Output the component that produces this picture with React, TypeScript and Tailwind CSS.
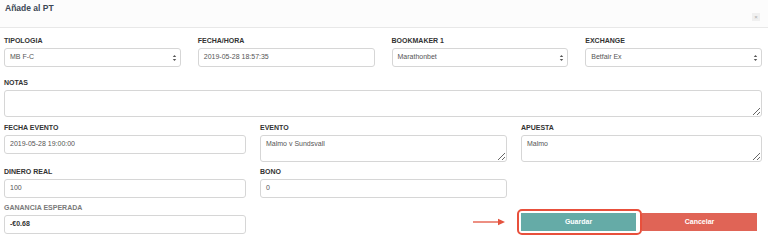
import React from "react";

const font = { fontFamily: '"Liberation Sans", Arial, sans-serif' };

function Label({ children, gray }: { children: React.ReactNode; gray?: boolean }) {
  return (
    <div className={`h-[10px] leading-[10px] text-[7px] font-bold mb-[2px] ${gray ? "text-[#7a7a7a]" : "text-[#333]"}`}>
      {children}
    </div>
  );
}

function Input({ value, bold }: { value: string; bold?: boolean }) {
  return (
    <div
      className={`h-[19px] border border-[#d6d6d6] rounded-[3px] bg-white flex items-center px-[5px] text-[7px] ${bold ? "font-bold text-[#333]" : "text-[#555]"}`}
    >
      {value}
    </div>
  );
}

function Select({ value }: { value: string }) {
  return (
    <div className="h-[19px] border border-[#d6d6d6] rounded-[3px] bg-white flex items-center justify-between pl-[5px] pr-[3px] text-[7px] text-[#555]">
      <span>{value}</span>
      <svg width="5" height="8" viewBox="0 0 5 8">
        <path d="M0.8 3 L2.5 1 L4.2 3 Z" fill="#555" />
        <path d="M0.8 5 L2.5 7 L4.2 5 Z" fill="#555" />
      </svg>
    </div>
  );
}

function TextArea({ value, h }: { value: string; h: string }) {
  return (
    <textarea
      readOnly
      value={value}
      className={`${h} w-full block border border-[#d6d6d6] rounded-[3px] bg-white px-[5px] pt-[3px] text-[7px] text-[#555] outline-none`}
      style={font}
    />
  );
}

export default function App() {
  return (
    <div className="w-[768px] h-[243px] bg-white overflow-hidden relative" style={font}>
      <div className="h-[28px] border-b border-[#e8e8e8] bg-[#fcfcfc] flex items-start justify-between px-[5px] pt-[3px]">
        <div className="text-[8.5px] font-bold text-[#3b4856] leading-[10px]">Añade al PT</div>
        <div className="mt-[10px] mr-[3px] w-[8px] h-[8px] bg-[#f0f0f0] text-[#aaa] text-[6px] leading-[8px] text-center">×</div>
      </div>

      <div className="px-[4px] pr-[6px]">
        {/* Row 1 */}
        <div className="grid grid-cols-4 gap-x-[17px] mt-[8px]">
          <div>
            <Label>TIPOLOGIA</Label>
            <Select value="MB F-C" />
          </div>
          <div>
            <Label>FECHA/HORA</Label>
            <Input value="2019-05-28 18:57:35" />
          </div>
          <div>
            <Label>BOOKMAKER 1</Label>
            <Select value="Marathonbet" />
          </div>
          <div>
            <Label>EXCHANGE</Label>
            <Select value="Betfair Ex" />
          </div>
        </div>

        {/* Notas */}
        <div className="mt-[11px]">
          <Label>NOTAS</Label>
          <TextArea value="" h="h-[27px]" />
        </div>

        {/* Row 3 */}
        <div className="grid grid-cols-[242px_247px_241px] gap-x-[14px] mt-[6px]">
          <div>
            <Label>FECHA EVENTO</Label>
            <Input value="2019-05-28 19:00:00" />
          </div>
          <div>
            <Label>EVENTO</Label>
            <TextArea value="Malmo v Sundsvall" h="h-[27px]" />
          </div>
          <div>
            <Label>APUESTA</Label>
            <TextArea value="Malmo" h="h-[27px]" />
          </div>
        </div>

        {/* Row 4 */}
        <div className="grid grid-cols-[242px_247px_241px] gap-x-[14px] mt-[5px]">
          <div>
            <Label>DINERO REAL</Label>
            <Input value="100" />
          </div>
          <div>
            <Label>BONO</Label>
            <Input value="0" />
          </div>
          <div />
        </div>

        {/* Row 5 */}
        <div className="grid grid-cols-[242px_247px_241px] gap-x-[14px] mt-[5px]">
          <div>
            <Label gray>GANANCIA ESPERADA</Label>
            <Input value="-€0.68" bold />
          </div>
          <div className="flex items-end justify-end pb-[8px] pr-[1px]">
            <svg width="33" height="8" viewBox="0 0 33 8">
              <line x1="0" y1="4" x2="27" y2="4" stroke="#e4533f" strokeWidth="1.3" />
              <path d="M25 0.8 L32 4 L25 7.2 Z" fill="#e4533f" />
            </svg>
          </div>
          <div className="relative">
            <div className="absolute left-[-4px] top-[6px] w-[125px] h-[26px] border-2 border-[#e8503c] rounded-[5px]" />
            <div className="flex mt-[10px] gap-[6px]">
              <div className="w-[115px] h-[18px] bg-[#65aba7] text-white text-[7px] font-bold flex items-center justify-center">
                Guardar
              </div>
              <div className="w-[115px] h-[18px] bg-[#e06456] text-white text-[7px] font-bold flex items-center justify-center">
                Cancelar
              </div>
            </div>
          </div>
        </div>
      </div>
    </div>
  );
}
